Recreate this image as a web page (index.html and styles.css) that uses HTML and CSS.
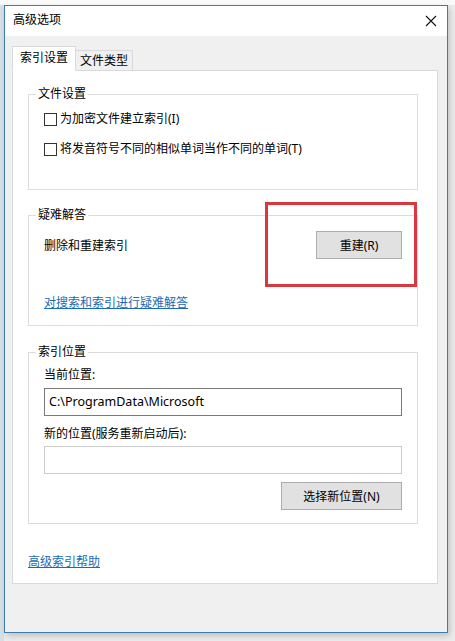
FILE: index.html
```html
<!DOCTYPE html>
<html lang="zh-CN">
<head>
<meta charset="utf-8">
<title>高级选项</title>
<link rel="stylesheet" href="styles.css">
</head>
<body>
<div class="screen">
  <div class="window">
    <div class="titlebar">
      <span class="title">高级选项</span>
      <svg class="close" width="12" height="12" viewBox="0 0 12 12"><path d="M1 1 L11 11 M11 1 L1 11" stroke="#111" stroke-width="1.1" fill="none"/></svg>
    </div>
    <div class="client">
      <div class="tabs">
        <div class="tab active">索引设置</div>
        <div class="tab">文件类型</div>
      </div>
      <div class="panel">
        <fieldset class="group g1">
          <legend>文件设置</legend>
          <label class="check"><span class="box"></span>为加密文件建立索引(I)</label>
          <label class="check c2"><span class="box"></span>将发音符号不同的相似单词当作不同的单词(T)</label>
        </fieldset>
        <fieldset class="group g2">
          <legend>疑难解答</legend>
          <div class="row">
            <span>删除和重建索引</span>
            <button class="btn rebuild">重建(R)</button>
          </div>
          <a class="link trouble" href="#">对搜索和索引进行疑难解答</a>
          <div class="highlight"></div>
        </fieldset>
        <fieldset class="group g3">
          <legend>索引位置</legend>
          <div class="label">当前位置:</div>
          <div class="input">C:\ProgramData\Microsoft</div>
          <div class="label l2">新的位置(服务重新启动后):</div>
          <div class="input empty"></div>
          <div class="btnrow"><button class="btn choose">选择新位置(N)</button></div>
        </fieldset>
        <a class="link help" href="#">高级索引帮助</a>
      </div>
    </div>
  </div>
</div>
</body>
</html>
```

FILE: styles.css
```css
* { box-sizing: border-box; }
html, body { margin: 0; padding: 0; }
body {
  width: 455px;
  height: 641px;
  overflow: hidden;
  background: #ececec;
  font-family: "Noto Sans", "Noto Sans CJK SC", sans-serif;
  font-size: 12px;
  color: #000;
}
.screen {
  width: 455px;
  height: 641px;
  padding: 5px 7px 8px 4px;
  background: linear-gradient(to bottom, #fafafa 0, #fafafa 5px, transparent 5px),
              linear-gradient(to right, #d8dee6 0, #d8dee6 4px, transparent 4px);
}
.window {
  width: 444px;
  height: 628px;
  border: 1px solid #3a7db3;
  background: #f0f0f0;
  box-shadow: 2px 3px 6px rgba(0,0,0,0.18);
  display: flex;
  flex-direction: column;
}
.titlebar {
  height: 30px;
  background: #fff;
  display: flex;
  align-items: center;
  justify-content: space-between;
  padding: 0 10px 0 8px;
  flex: none;
}
.title { font-size: 12px; line-height: 16px; margin-top: -2px; }
.client {
  flex: 1;
  padding: 10px 9px 48px 7px;
  display: flex;
  flex-direction: column;
}
.tabs {
  display: flex;
  align-items: flex-end;
  height: 25px;
  position: relative;
  z-index: 1;
  margin-bottom: -1px;
}
.tab {
  border: 1px solid #d9d9d9;
  border-left: none;
  line-height: 18px;
  background: #f0f0f0;
  padding: 1px 4px;
  height: 21px;
  white-space: nowrap;
}
.tab.active {
  background: #fff;
  border-left: 1px solid #d9d9d9;
  border-bottom-color: #fff;
  height: 25px;
  padding: 2px 7px 0 7px;
}
.panel {
  flex: 1;
  background: #fff;
  border: 1px solid #d9d9d9;
  padding: 16px 19px 0 15px;
  display: flex;
  flex-direction: column;
}
.group {
  margin: 0;
  border: 1px solid #dcdcdc;
  padding: 0 15px;
  position: relative;
}
.group legend {
  padding: 0 2px;
  margin-left: -8px;
  line-height: 14px;
  font-size: 12px;
}
.g1 { height: 103px; padding-top: 10px; }
.check {
  display: flex;
  align-items: center;
  height: 16px;
  line-height: 16px;
}
.c2 { margin-top: 14px; }
.box {
  width: 13px;
  height: 13px;
  border: 1px solid #333;
  background: #fff;
  margin-right: 3px;
  flex: none;
}
.g2 { height: 118px; margin-top: 18px; padding-top: 9px; }
.row {
  display: flex;
  align-items: center;
  justify-content: space-between;
}
.btn {
  font-family: inherit;
  font-size: 12px;
  color: #000;
  background: #e1e1e1;
  border: 1px solid #adadad;
  height: 28px;
  padding: 0;
}
.rebuild { width: 86px; }
.link {
  color: #1a6bb3;
  text-decoration: underline;
  line-height: 16px;
}
.trouble { display: inline-block; margin-top: 36px; }
.highlight {
  position: absolute;
  left: 236px;
  top: -20px;
  width: 152px;
  height: 85px;
  border: 3px solid #d9383f;
  pointer-events: none;
}
.g3 { height: 179px; margin-top: 19px; padding-top: 8px; }
.label { line-height: 16px; }
.l2 { margin-top: 10px; }
.input {
  margin-top: 5px;
  height: 28px;
  border: 1px solid #7a7a7a;
  padding: 0 4px;
  line-height: 26px;
  font-size: 12.5px;
}
.input.empty { border-color: #cccccc; margin-top: 4px; }
.btnrow {
  display: flex;
  justify-content: flex-end;
  margin-top: 8px;
}
.choose { width: 121px; }
.help { align-self: flex-start; margin-top: 30px; }
```
